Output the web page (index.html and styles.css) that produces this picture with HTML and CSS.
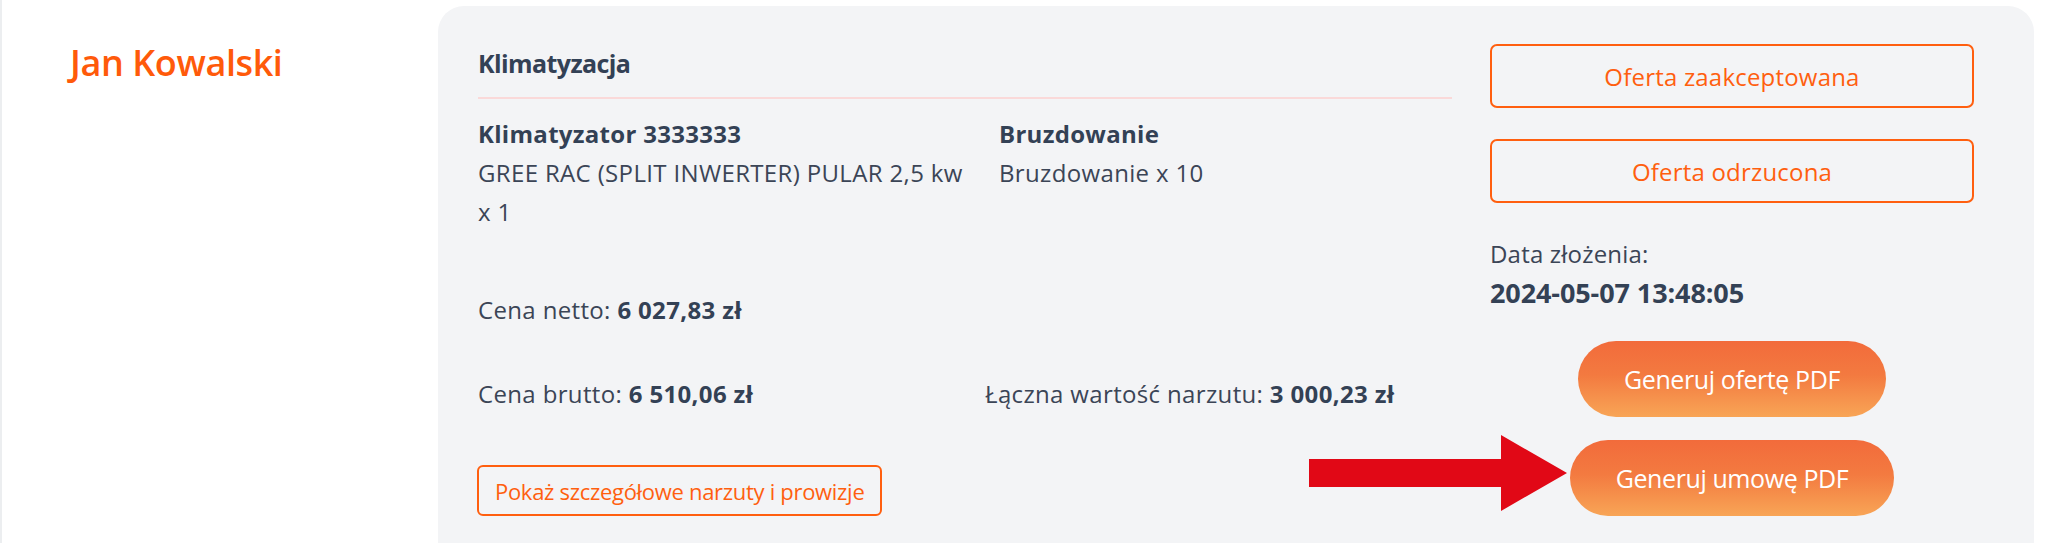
FILE: index.html
```html
<!DOCTYPE html>
<html lang="pl">
<head>
<meta charset="utf-8">
<title>Oferta</title>
<link rel="stylesheet" href="styles.css">
</head>
<body>
<div class="page">
  <div class="client">
    <h2 class="client-name">Jan Kowalski</h2>
  </div>
  <div class="card">
    <div class="offer">
      <h3 class="offer-title">Klimatyzacja</h3>
      <div class="items">
        <div class="item item-first">
          <div class="item-name">Klimatyzator 3333333</div>
          <div class="item-desc">GREE RAC (SPLIT INWERTER) PULAR 2,5 kw x 1</div>
        </div>
        <div class="item">
          <div class="item-name">Bruzdowanie</div>
          <div class="item-desc">Bruzdowanie x 10</div>
        </div>
      </div>
      <div class="price price-net">Cena netto: <b>6 027,83 zł</b></div>
      <div class="prices">
        <div class="price">Cena brutto: <b>6 510,06 zł</b></div>
        <div class="price">Łączna wartość narzutu: <b>3 000,23 zł</b></div>
      </div>
      <button class="btn-details" type="button">Pokaż szczegółowe narzuty i prowizje</button>
    </div>
    <div class="actions">
      <button class="btn-outline" type="button">Oferta zaakceptowana</button>
      <button class="btn-outline btn-second" type="button">Oferta odrzucona</button>
      <div class="date">
        <div>Data złożenia:</div>
        <div class="date-value">2024-05-07 13:48:05</div>
      </div>
      <button class="btn-pdf btn-pdf-offer" type="button">Generuj ofertę PDF</button>
      <button class="btn-pdf btn-pdf-contract" type="button">Generuj umowę PDF</button>
    </div>
    <svg class="arrow" width="260" height="78" viewBox="0 0 260 78" aria-hidden="true">
      <polygon points="0,24 192,24 192,0 258,38 192,76 192,52 0,52" fill="#e10816"/>
    </svg>
  </div>
</div>
</body>
</html>
```

FILE: styles.css
```css
* {
  box-sizing: border-box;
}

html, body {
  margin: 0;
  padding: 0;
  background: #ffffff;
  overflow: hidden;
}

body {
  font-family: "Open Sans", "Noto Sans", sans-serif;
  font-size: 24px;
  line-height: 39px;
  color: #3b4556;
  letter-spacing: 0.35px;
}

.page {
  display: grid;
  grid-template-columns: 436px 1596px;
  padding-top: 6px;
  border-left: 2px solid #eceef0;
  min-height: 560px;
}

.client {
  padding: 30px 0 0 68px;
}

.client-name {
  margin: 0;
  font-size: 36px;
  line-height: 54px;
  font-weight: 600;
  color: #ff5a0a;
  letter-spacing: -0.4px;
}

.card {
  position: relative;
  display: grid;
  grid-template-columns: 974px 484px;
  column-gap: 38px;
  padding: 38px 60px 40px 40px;
  background: #f3f4f6;
  border-radius: 26px 26px 0 0;
  min-height: 580px;
}

.offer {
  display: flex;
  flex-direction: column;
  align-items: flex-start;
}

.offer-title {
  align-self: stretch;
  margin: 0;
  font-size: 25px;
  line-height: 39px;
  font-weight: 700;
  color: #334155;
  padding-bottom: 14px;
  border-bottom: 2px solid #fad9d9;
  letter-spacing: -0.6px;
}

.items {
  display: grid;
  grid-template-columns: 500px 1fr;
  column-gap: 21px;
  margin-top: 15px;
}

.item-name {
  font-weight: 700;
  color: #334155;
  letter-spacing: 0.3px;
}

.price b {
  font-weight: 700;
  color: #334155;
}

.price-net {
  margin-top: 59px;
}

.prices {
  display: grid;
  grid-template-columns: 507px 1fr;
  margin-top: 45px;
  width: 100%;
}

.btn-details {
  margin: 52px 0 0 -1px;
  height: 51px;
  padding: 0 16px;
  font-family: inherit;
  font-size: 22px;
  letter-spacing: -0.3px;
  color: #ff5f0f;
  background: transparent;
  border: 2px solid #ff5f0f;
  border-radius: 6px;
}

.actions {
  display: flex;
  flex-direction: column;
  align-items: center;
}

.btn-outline {
  width: 100%;
  height: 64px;
  margin: 0;
  font-family: inherit;
  font-size: 24px;
  letter-spacing: 0.2px;
  color: #ff5f0f;
  background: transparent;
  border: 2px solid #ff5f0f;
  border-radius: 7px;
}

.btn-second {
  margin-top: 31px;
}

.date {
  align-self: stretch;
  margin-top: 31px;
  letter-spacing: 0.2px;
}

.date-value {
  font-size: 27px;
  font-weight: 700;
  color: #334155;
  letter-spacing: -0.1px;
}

.btn-pdf {
  height: 76px;
  padding: 0 46px;
  font-family: inherit;
  font-size: 25px;
  letter-spacing: -0.4px;
  color: #ffffff;
  border: 0;
  border-radius: 38px;
  background: linear-gradient(to bottom, #f26b3b 0%, #f37a40 45%, #f8a556 100%);
}

.btn-pdf-offer {
  margin-top: 29px;
}

.btn-pdf-contract {
  margin-top: 23px;
}

.arrow {
  position: absolute;
  left: 871px;
  top: 429px;
}
```
